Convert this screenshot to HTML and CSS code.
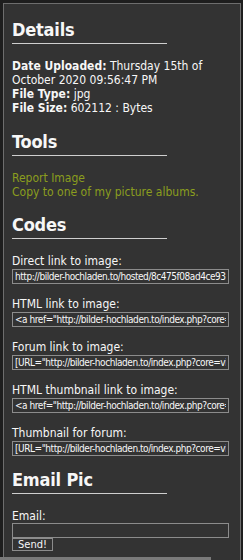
FILE: index.html
```html
<!DOCTYPE html>
<html lang="en">
<head>
    <meta charset="UTF-8">
    <title>Image details</title>
    <link rel="stylesheet" href="styles.css">
</head>
<body>

    <div class="panel">
        <h2 class="section-title">Details</h2>
        <div class="details">
            <b>Date Uploaded:</b> Thursday 15th of October 2020 09:56:47 PM<br>
            <b>File Type:</b> jpg<br>
            <b>File Size:</b> 602112 : Bytes
        </div>

        <h2 class="section-title">Tools</h2>
        <div class="tools">
            <a href="#">Report Image</a><br>
            <a href="#">Copy to one of my picture albums.</a>
        </div>

        <h2 class="section-title">Codes</h2>
        <div class="codes">
            <div class="code-group">
                <label>Direct link to image:</label>
                <input type="text" value="http://bilder-hochladen.to/hosted/8c475f08ad4ce9339a1b.jpg" readonly>
            </div>
            <div class="code-group">
                <label>HTML link to image:</label>
                <input type="text" value='&lt;a href="http://bilder-hochladen.to/index.php?core=view&amp;img=8c475f08ad4ce9339a1b"&gt;' readonly>
            </div>
            <div class="code-group">
                <label>Forum link to image:</label>
                <input type="text" value='[URL="http://bilder-hochladen.to/index.php?core=view&amp;img=8c475f08ad4ce9339a1b"]' readonly>
            </div>
            <div class="code-group">
                <label>HTML thumbnail link to image:</label>
                <input type="text" value='&lt;a href="http://bilder-hochladen.to/index.php?core=view&amp;img=8c475f08ad4ce9339a1b"&gt;' readonly>
            </div>
            <div class="code-group">
                <label>Thumbnail for forum:</label>
                <input type="text" value='[URL="http://bilder-hochladen.to/index.php?core=view&amp;img=8c475f08ad4ce9339a1b"]' readonly>
            </div>
        </div>

        <h2 class="section-title">Email Pic</h2>
        <form class="email-form" onsubmit="return false">
            <label for="email">Email:</label>
            <input type="text" id="email">
            <button type="submit">Send!</button>
        </form>
    </div>

    <!-- the window's scrollbar strip -->
    <div class="scroll-strip"></div>

</body>
</html>
```

FILE: styles.css
```css
html, body {
    height: 100%;
}

body {
    margin: 0;
    background-color: #1e1e1e;
    font-family: 'DejaVu Sans Condensed', 'DejaVu Sans', sans-serif;
    font-size: 12px;
    line-height: 14px;
    color: #f7f7f7;
    overflow: hidden;
}

.panel {
    margin: 3px 2px 0 3px;
    border: 1px solid #6e6e6e;
    background: #333333;
    padding: 16px 10px 40px 8px;
}

.section-title {
    width: 155px;
    margin: 0 0 15px 0;
    padding-bottom: 3px;
    border-bottom: 1px solid #cfcfcf;
    font-size: 18px;
    line-height: 20px;
    font-weight: bold;
    letter-spacing: -0.2px;
}

.details {
    margin-bottom: 17px;
}

.tools {
    margin-bottom: 16px;
}

.tools a {
    color: #8b9e1e;
    text-decoration: none;
}

.codes {
    margin-bottom: 14px;
}

.code-group {
    margin-bottom: 13px;
}

.code-group:last-child {
    margin-bottom: 0;
}

label {
    display: block;
    margin-bottom: 1px;
}

input {
    display: block;
    width: 217px;
    height: 15px;
    box-sizing: border-box;
    margin: 0;
    padding: 0 2px;
    border: 1px solid #8c8c8c;
    background: #333333;
    color: #f7f7f7;
    font-family: 'DejaVu Sans Condensed', sans-serif;
    font-size: 10px;
    letter-spacing: -0.45px;
    outline: none;
}

.email-form label {
    margin-bottom: 0;
}

.email-form button {
    display: block;
    width: 41px;
    height: 13px;
    padding: 0;
    margin: 0;
    border: 1px solid #8c8c8c;
    background: #333333;
    color: #f7f7f7;
    font-family: 'DejaVu Sans Condensed', sans-serif;
    font-size: 11px;
    line-height: 11px;
}

.scroll-strip {
    position: fixed;
    left: 0;
    bottom: 0;
    width: 211px;
    height: 3px;
    background: #7a7a7a;
}
```
